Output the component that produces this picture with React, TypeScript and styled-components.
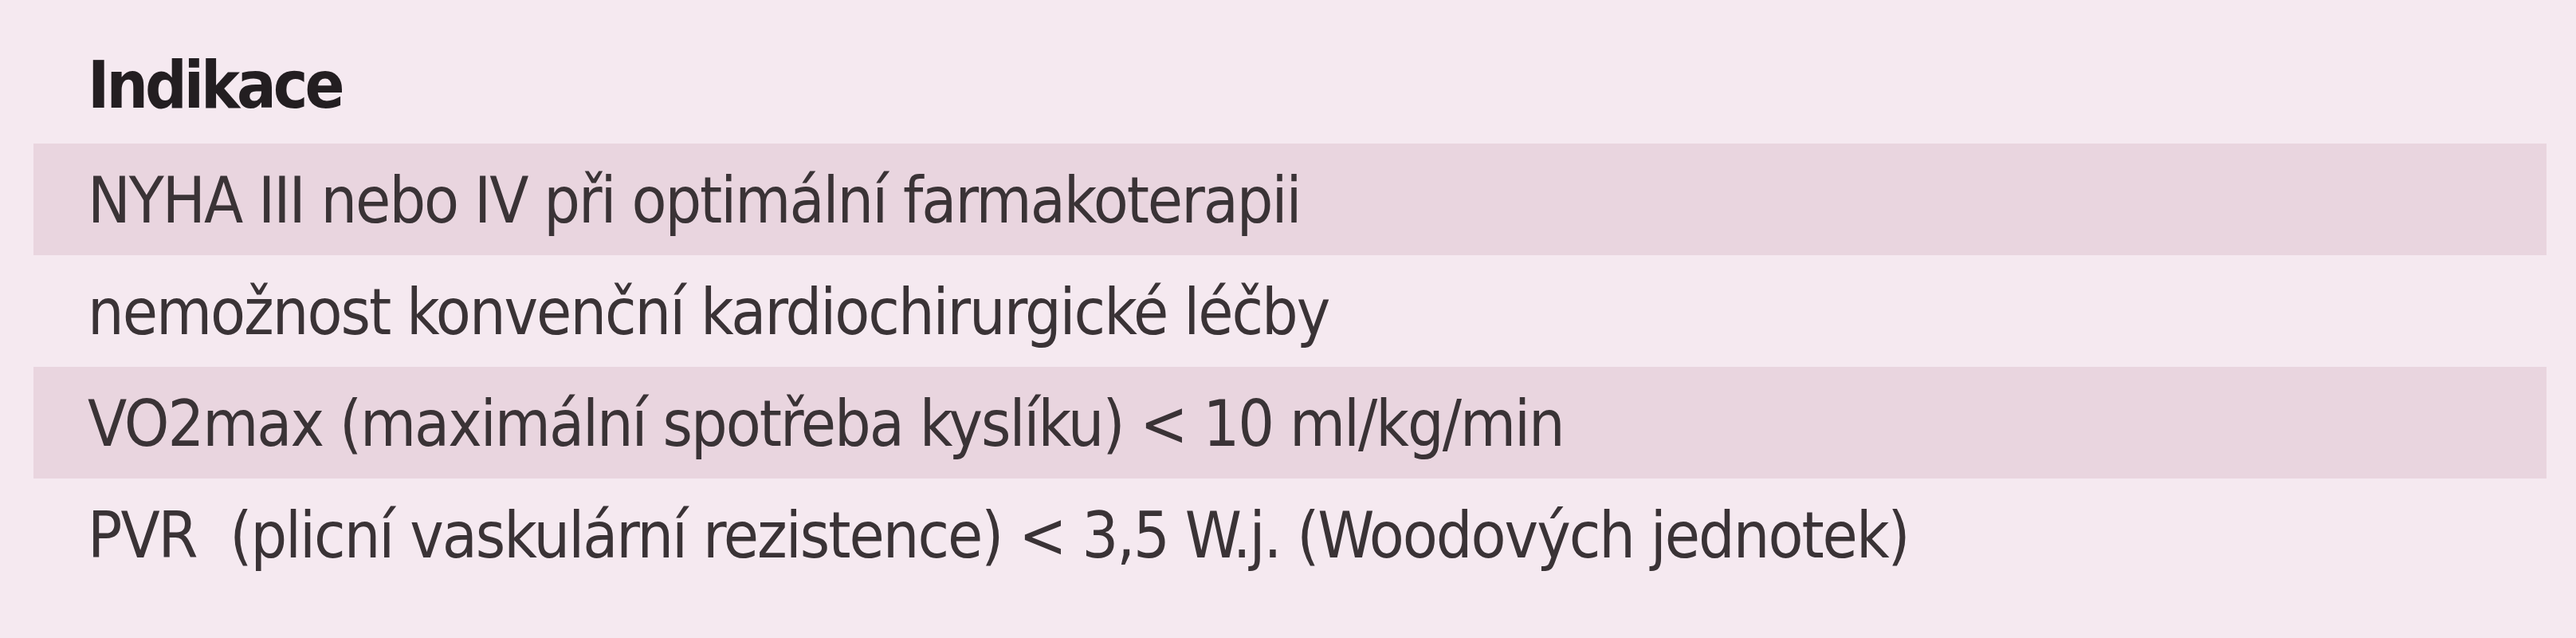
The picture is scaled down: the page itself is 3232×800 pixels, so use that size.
import React from 'react';
import styled, { createGlobalStyle } from 'styled-components';

const GlobalStyle = createGlobalStyle`
  html, body {
    margin: 0;
    padding: 0;
    background: #f5e9f0;
  }
  body {
    width: 3232px;
    height: 800px;
    overflow: hidden;
    font-family: "Liberation Sans Narrow", "DejaVu Sans Condensed", "Liberation Sans", sans-serif;
    color: #3a3336;
  }
`;

const Table = styled.div`
  width: 3153px;
  margin-left: 42px;
  display: flex;
  flex-direction: column;
`;

const Heading = styled.div`
  height: 180px;
  box-sizing: border-box;
  padding: 51px 0 0 68px;
  font-size: 82px;
  line-height: 112px;
  font-weight: 700;
  letter-spacing: -4px;
  color: #231e21;
  white-space: nowrap;
`;

const Row = styled.div<{ $shaded?: boolean }>`
  height: 140px;
  box-sizing: border-box;
  padding: 3px 0 0 68px;
  background: ${(p) => (p.$shaded ? '#e9d5df' : 'transparent')};
  font-size: 80px;
  line-height: 137px;
  letter-spacing: -2px;
  white-space: nowrap;
`;

const rows = [
  'NYHA III nebo IV při optimální farmakoterapii',
  'nemožnost konvenční kardiochirurgické léčby',
  'VO2max (maximální spotřeba kyslíku) < 10 ml/kg/min',
  'PVR\u00a0 (plicní vaskulární rezistence) < 3,5 W.j. (Woodových jednotek)',
];

const App = () => (
  <>
    <GlobalStyle />
    <Table>
      <Heading>Indikace</Heading>
      {rows.map((text, i) => (
        <Row key={text} $shaded={i % 2 === 0}>
          {text}
        </Row>
      ))}
    </Table>
  </>
);

export default App;
